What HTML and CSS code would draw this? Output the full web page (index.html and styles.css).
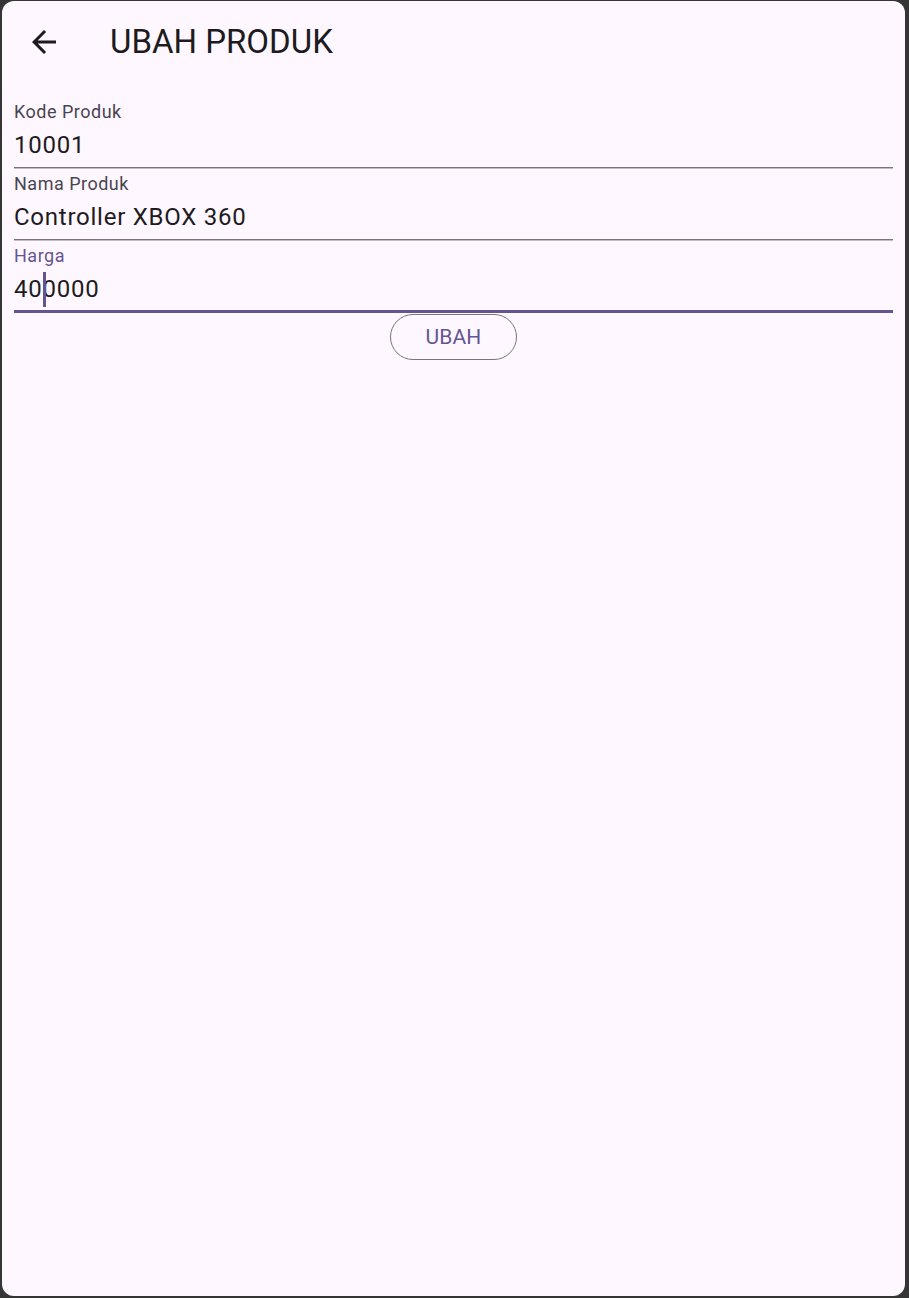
FILE: index.html
```html
<!DOCTYPE html>
<html lang="id">
<head>
<meta charset="utf-8">
<title>Ubah Produk</title>
<link rel="stylesheet" href="styles.css">
</head>
<body>
<div class="panel">
  <header class="appbar">
    <button class="back" aria-label="Kembali">
      <svg viewBox="0 0 24 24" width="36" height="36"><path d="M20 11H7.83l5.59-5.59L12 4l-8 8 8 8 1.41-1.41L7.83 13H20v-2z" fill="#1d1b20"/></svg>
    </button>
    <h1 class="title">UBAH PRODUK</h1>
  </header>
  <form class="form">
    <div class="field">
      <div class="label">Kode Produk</div>
      <div class="value">10001</div>
    </div>
    <div class="field">
      <div class="label">Nama Produk</div>
      <div class="value">Controller XBOX 360</div>
    </div>
    <div class="field focused">
      <div class="label">Harga</div>
      <div class="value">40<span class="caret-anchor"><span class="caret"></span></span>0000</div>
    </div>
    <div class="actions">
      <button type="button" class="outlined">UBAH</button>
    </div>
  </form>
</div>
</body>
</html>
```

FILE: styles.css
```css
* { box-sizing: border-box; }
html, body { margin: 0; padding: 0; }
body {
  background: #353535;
  padding: 1px 4px 2px 2px;
  font-family: Roboto, "Liberation Sans", sans-serif;
  color: #1d1b20;
}
.panel {
  background: #fef7ff;
  height: 1295px;
  border-radius: 12px;
  overflow: hidden;
}
.appbar {
  height: 82px;
  display: flex;
  align-items: center;
  padding-left: 24px;
}
.back {
  width: 36px;
  height: 36px;
  padding: 0;
  border: 0;
  background: none;
  display: flex;
  align-items: center;
  justify-content: center;
  margin-right: 48px;
}
.back svg { display: block; }
.title {
  margin: 0;
  font-size: 33px;
  font-weight: 400;
  line-height: 40px;
  color: #1d1b20;
}
.form {
  margin-top: 13px;
  padding: 0 12px;
}
.field {
  padding: 4px 0 4px;
  border-bottom: 1px solid #79747e;
  box-shadow: 0 1px 0 rgba(121, 116, 126, 0.45);
}
.label {
  font-size: 18px;
  line-height: 24px;
  letter-spacing: 0.5px;
  color: #49454f;
}
.value {
  margin-top: 3px;
  font-size: 24px;
  line-height: 36px;
  letter-spacing: 0.75px;
  color: #1d1b20;
}
.field.focused {
  padding-bottom: 3px;
  border-bottom: 3px solid #65558f;
  box-shadow: none;
}
.field.focused .label { color: #65558f; }
.caret-anchor {
  position: relative;
  display: inline-block;
  width: 0;
  height: 0;
}
.caret {
  position: absolute;
  left: 1px;
  top: -25px;
  width: 3px;
  height: 35px;
  background: #65558f;
}
.actions {
  display: flex;
  justify-content: center;
  padding-top: 1px;
}
.outlined {
  height: 46px;
  width: 127px;
  border: 1.5px solid #79747e;
  border-radius: 23px;
  background: transparent;
  color: #65558f;
  font-family: Roboto, "Liberation Sans", sans-serif;
  font-size: 21px;
  font-weight: 400;
  letter-spacing: 0.15px;
  padding: 0;
}
```
